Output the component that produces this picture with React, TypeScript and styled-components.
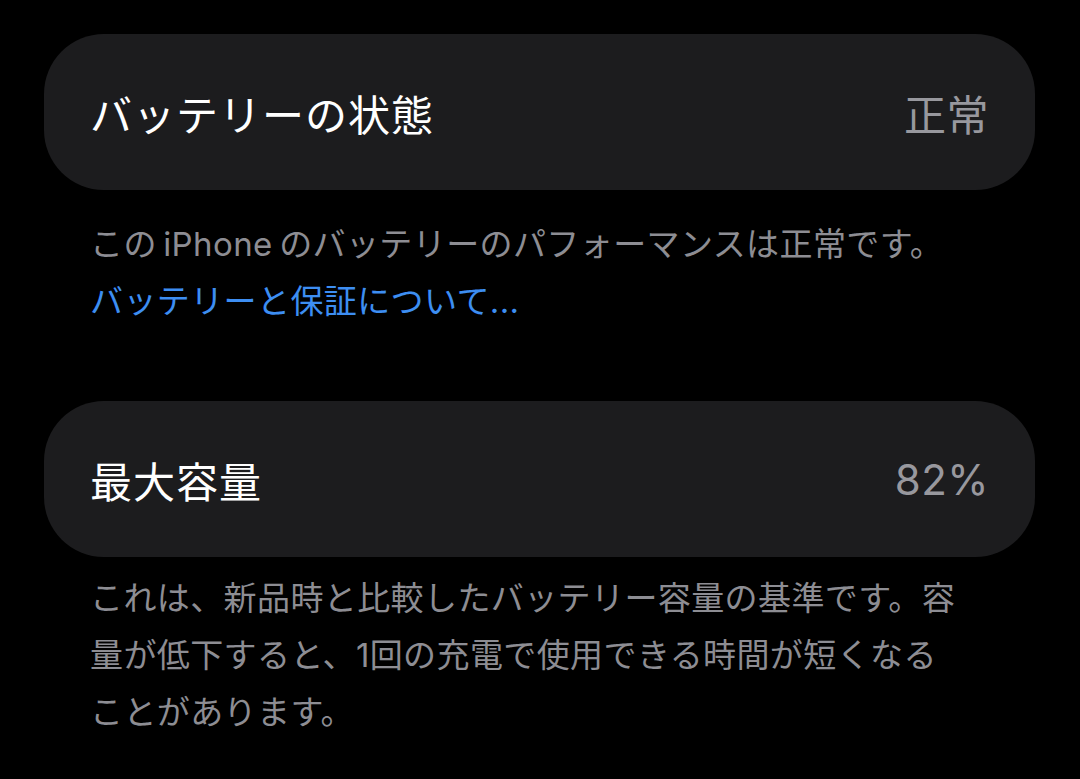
import styled, { createGlobalStyle } from "styled-components";

const GlobalStyle = createGlobalStyle`
  html, body {
    margin: 0;
    padding: 0;
    background: #000000;
  }
  body {
    font-family: "Inter", "Noto Sans CJK JP", sans-serif;
    -webkit-font-smoothing: antialiased;
  }
`;

const Page = styled.main`
  width: 1080px;
  height: 779px;
  box-sizing: border-box;
  padding: 34px 45px 0 44px;
  background: #000000;
  overflow: hidden;
`;

const Section = styled.section<{ $gap: number }>`
  display: flex;
  flex-direction: column;
  gap: ${(p) => p.$gap}px;
  margin-bottom: 71px;
`;

const Card = styled.div`
  height: 156px;
  box-sizing: border-box;
  padding: 0 46px 0 46px;
  display: flex;
  align-items: center;
  justify-content: space-between;
  background: #1c1c1e;
  border-radius: 60px;
`;

const Title = styled.span`
  color: #ffffff;
  font-size: 42px;
  font-weight: 400;
  letter-spacing: 1px;
`;

const Value = styled.span`
  color: #98989e;
  font-size: 42px;
  font-weight: 400;
  letter-spacing: 0.5px;
`;

const Footer = styled.p`
  margin: 0;
  padding-left: 46px;
  color: #8d8d93;
  font-size: 33px;
  line-height: 57px;
  letter-spacing: 0.4px;
`;

const Link = styled.a`
  display: block;
  color: #3d8ef2;
  text-decoration: none;
`;

export default function App() {
  return (
    <>
      <GlobalStyle />
      <Page>
        <Section $gap={26}>
          <Card>
            <Title>バッテリーの状態</Title>
            <Value>正常</Value>
          </Card>
          <Footer>
            この{"\u2009"}iPhone{"\u2009"}のバッテリーのパフォーマンスは正常です。
            <Link href="#">バッテリーと保証について...</Link>
          </Footer>
        </Section>
        <Section $gap={13}>
          <Card>
            <Title>最大容量</Title>
            <Value>82%</Value>
          </Card>
          <Footer>
            これは、新品時と比較したバッテリー容量の基準です。容
            <br />
            量が低下すると、1回の充電で使用できる時間が短くなる
            <br />
            ことがあります。
          </Footer>
        </Section>
      </Page>
    </>
  );
}
